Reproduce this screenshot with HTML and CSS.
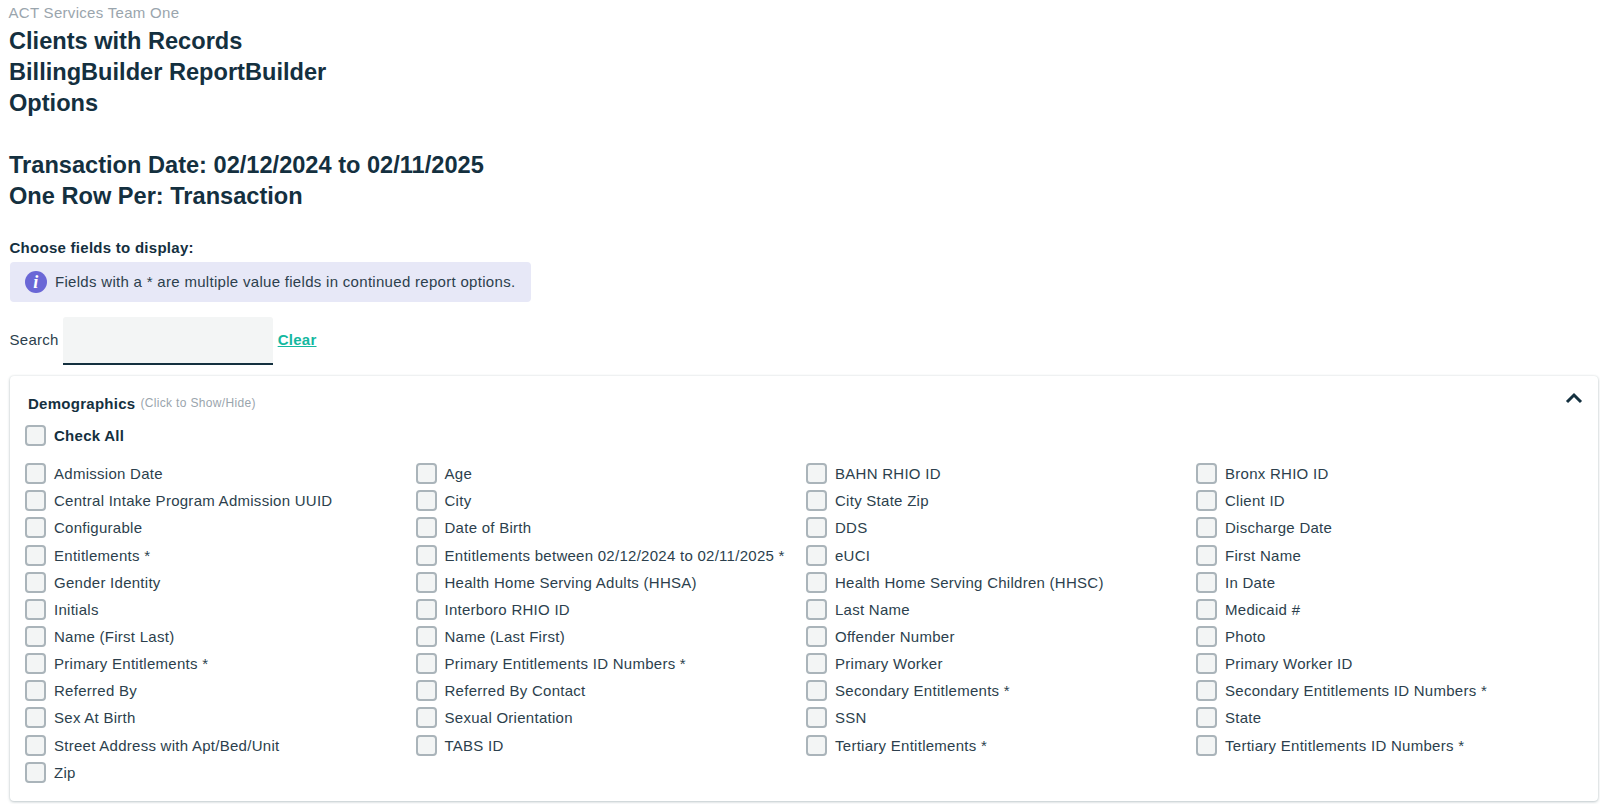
FILE: index.html
```html
<!DOCTYPE html>
<html lang="en">
<head>
<meta charset="utf-8">
<title>Clients with Records</title>
<link rel="stylesheet" href="styles.css">
</head>
<body>
<div class="crumb">ACT Services Team One</div>
<h1 class="title">Clients with Records<br>BillingBuilder ReportBuilder<br>Options<br><br>Transaction Date: 02/12/2024 to 02/11/2025<br>One Row Per: Transaction</h1>
<div class="choose">Choose fields to display:</div>
<div class="notice">
  <svg class="notice-icon" viewBox="0 0 22 22" width="22" height="22"><circle cx="11" cy="11" r="11" fill="#6a67d6"/><text x="11" y="17" text-anchor="middle" class="notice-i">i</text></svg>
  <span class="notice-text">Fields with a * are multiple value fields in continued report options.</span>
</div>
<div class="search">
  <label class="search-label" for="q">Search</label>
  <input class="search-input" id="q" type="text">
  <a class="clear" href="#">Clear</a>
</div>
<section class="card">
  <div class="card-head">
    <span class="card-title">Demographics</span>
    <span class="card-hint">(Click to Show/Hide)</span>
    <svg class="chevron" viewBox="0 0 18 12" width="18" height="12"><path d="M2 10 L9 3 L16 10" fill="none" stroke="#14303f" stroke-width="3"/></svg>
  </div>
  <label class="check check-all"><span class="box"></span>Check All</label>
  <div class="fields">
    <label class="check"><span class="box"></span>Admission Date</label>
    <label class="check"><span class="box"></span>Age</label>
    <label class="check"><span class="box"></span>BAHN RHIO ID</label>
    <label class="check"><span class="box"></span>Bronx RHIO ID</label>
    <label class="check"><span class="box"></span>Central Intake Program Admission UUID</label>
    <label class="check"><span class="box"></span>City</label>
    <label class="check"><span class="box"></span>City State Zip</label>
    <label class="check"><span class="box"></span>Client ID</label>
    <label class="check"><span class="box"></span>Configurable</label>
    <label class="check"><span class="box"></span>Date of Birth</label>
    <label class="check"><span class="box"></span>DDS</label>
    <label class="check"><span class="box"></span>Discharge Date</label>
    <label class="check"><span class="box"></span>Entitlements *</label>
    <label class="check"><span class="box"></span>Entitlements between 02/12/2024 to 02/11/2025 *</label>
    <label class="check"><span class="box"></span>eUCI</label>
    <label class="check"><span class="box"></span>First Name</label>
    <label class="check"><span class="box"></span>Gender Identity</label>
    <label class="check"><span class="box"></span>Health Home Serving Adults (HHSA)</label>
    <label class="check"><span class="box"></span>Health Home Serving Children (HHSC)</label>
    <label class="check"><span class="box"></span>In Date</label>
    <label class="check"><span class="box"></span>Initials</label>
    <label class="check"><span class="box"></span>Interboro RHIO ID</label>
    <label class="check"><span class="box"></span>Last Name</label>
    <label class="check"><span class="box"></span>Medicaid #</label>
    <label class="check"><span class="box"></span>Name (First Last)</label>
    <label class="check"><span class="box"></span>Name (Last First)</label>
    <label class="check"><span class="box"></span>Offender Number</label>
    <label class="check"><span class="box"></span>Photo</label>
    <label class="check"><span class="box"></span>Primary Entitlements *</label>
    <label class="check"><span class="box"></span>Primary Entitlements ID Numbers *</label>
    <label class="check"><span class="box"></span>Primary Worker</label>
    <label class="check"><span class="box"></span>Primary Worker ID</label>
    <label class="check"><span class="box"></span>Referred By</label>
    <label class="check"><span class="box"></span>Referred By Contact</label>
    <label class="check"><span class="box"></span>Secondary Entitlements *</label>
    <label class="check"><span class="box"></span>Secondary Entitlements ID Numbers *</label>
    <label class="check"><span class="box"></span>Sex At Birth</label>
    <label class="check"><span class="box"></span>Sexual Orientation</label>
    <label class="check"><span class="box"></span>SSN</label>
    <label class="check"><span class="box"></span>State</label>
    <label class="check"><span class="box"></span>Street Address with Apt/Bed/Unit</label>
    <label class="check"><span class="box"></span>TABS ID</label>
    <label class="check"><span class="box"></span>Tertiary Entitlements *</label>
    <label class="check"><span class="box"></span>Tertiary Entitlements ID Numbers *</label>
    <label class="check"><span class="box"></span>Zip</label>
  </div>
</section>
</body>
</html>
```
FILE: styles.css
```css
* { box-sizing: border-box; }
html, body { height: 804px; overflow: hidden; }
body {
  margin: 0;
  padding: 5px 2px 0 10px;
  background: #fff;
  color: #14303f;
  font-family: "Liberation Sans", Arial, sans-serif;
  font-size: 15px;
  letter-spacing: 0.27px;
}
.crumb { color: #9aa5ad; font-size: 15px; line-height: 16px; letter-spacing: 0.3px; margin-left: -1.5px; }
.title {
  margin: 5px 0 0 -1px;
  font-size: 23.6px;
  line-height: 31px;
  font-weight: 700;
  letter-spacing: 0;
}
.choose { margin: 27px 0 0 -0.5px; line-height: 18px; font-weight: 700; }
.notice {
  display: flex;
  align-items: center;
  gap: 8px;
  width: 521px;
  height: 40px;
  margin-top: 5px;
  padding-left: 15px;
  background: #e7e8f7;
  border-radius: 4px;
  color: #2c3f4d;
}
.notice-icon { flex: none; }
.notice-i { fill: #fff; font-family: "Liberation Serif", serif; font-size: 18px; font-weight: 700; font-style: italic; }
.notice-text { margin-bottom: 1px; letter-spacing: 0.3px; }
.search { display: flex; align-items: center; margin-top: 15px; }
.search-label { color: #2c3f4d; margin: 0 4px 3px -0.5px; }
.search-input {
  width: 210px;
  height: 48px;
  padding: 0 8px;
  border: 0;
  border-bottom: 2px solid #14303f;
  border-radius: 3px 3px 0 0;
  background: #f3f5f5;
}
.clear { margin: 0 0 3px 5px; color: #14b8a0; font-weight: 700; text-decoration: underline; }
.card {
  height: 425px;
  margin-top: 11px;
  padding: 17px 15px 0 15px;
  background: #fff;
  border-radius: 4px;
  box-shadow: 0 1px 3px rgba(60, 90, 100, 0.3), 0 0 2px rgba(60, 90, 100, 0.15);
}
.card-head { display: flex; align-items: center; height: 20px; padding-left: 3px; }
.card-title { font-weight: 700; }
.card-hint { margin-left: 5px; color: #9aa5ad; font-size: 12px; letter-spacing: 0.33px; }
.chevron { margin-left: auto; position: relative; top: -5px; }
.check {
  display: flex;
  align-items: center;
  gap: 8px;
  height: 27.15px;
  color: #2c3f4d;
}
.check-all { margin-top: 9px; color: #14303f; font-weight: 700; }
.fields { display: grid; grid-template-columns: 390.5px 390.5px 390px 390px; margin-top: 11px; }
.box {
  flex: none;
  width: 21px;
  height: 21px;
  border: 2px solid #aab4ba;
  border-radius: 4px;
  background: #f3f5f5;
}
```
